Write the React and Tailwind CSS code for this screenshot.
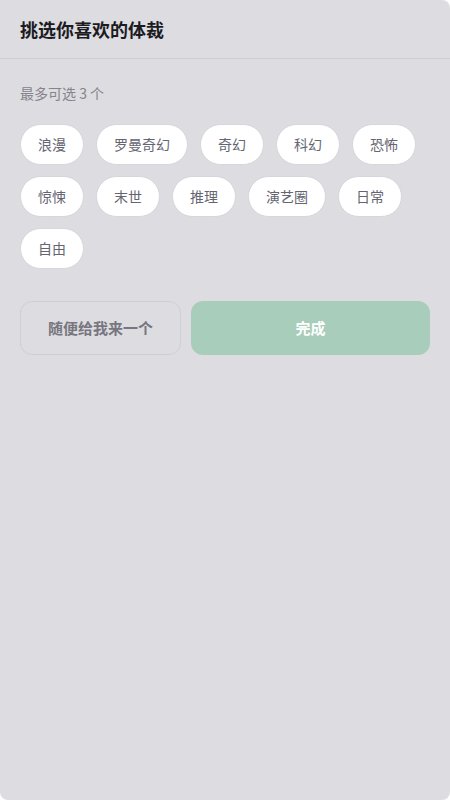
const genres = ["浪漫", "罗曼奇幻", "奇幻", "科幻", "恐怖", "惊悚", "末世", "推理", "演艺圈", "日常", "自由"];

function GenrePicker() {
  return (
    <div className="min-h-[800px] w-full bg-[#dddce1] rounded-lg rounded-tl-none" style={{ fontFamily: '"Noto Sans CJK SC", "Noto Sans", sans-serif' }}>
      <div className="h-[59px] flex items-center px-5 border-b border-[#cfced5]">
        <h2 className="text-[18px] font-bold text-[#1b1b22]">挑选你喜欢的体裁</h2>
      </div>
      <div className="px-5 pt-[24px]">
        <p className="text-[14px] text-[#85848d] leading-5">最多可选 3 个</p>
        <div className="mt-[21px] flex flex-wrap gap-x-3 gap-y-[11px]">
          {genres.map((g) => (
            <button
              key={g}
              className="h-[41px] px-[17px] rounded-full bg-white border border-[#d6d5db] text-[14px] text-[#656572]"
            >
              {g}
            </button>
          ))}
        </div>
        <div className="mt-[32px] flex gap-[10px]">
          <button className="w-[161px] h-[54px] rounded-xl border border-[#d0cfd5] text-[15px] font-bold text-[#77767f]">
            随便给我来一个
          </button>
          <button className="flex-1 h-[54px] rounded-xl bg-[#a8cdba] text-[15px] font-bold text-white">
            完成
          </button>
        </div>
      </div>
    </div>
  );
}

export default function App() {
  return (
    <div className="bg-white">
      <GenrePicker />
    </div>
  );
}
